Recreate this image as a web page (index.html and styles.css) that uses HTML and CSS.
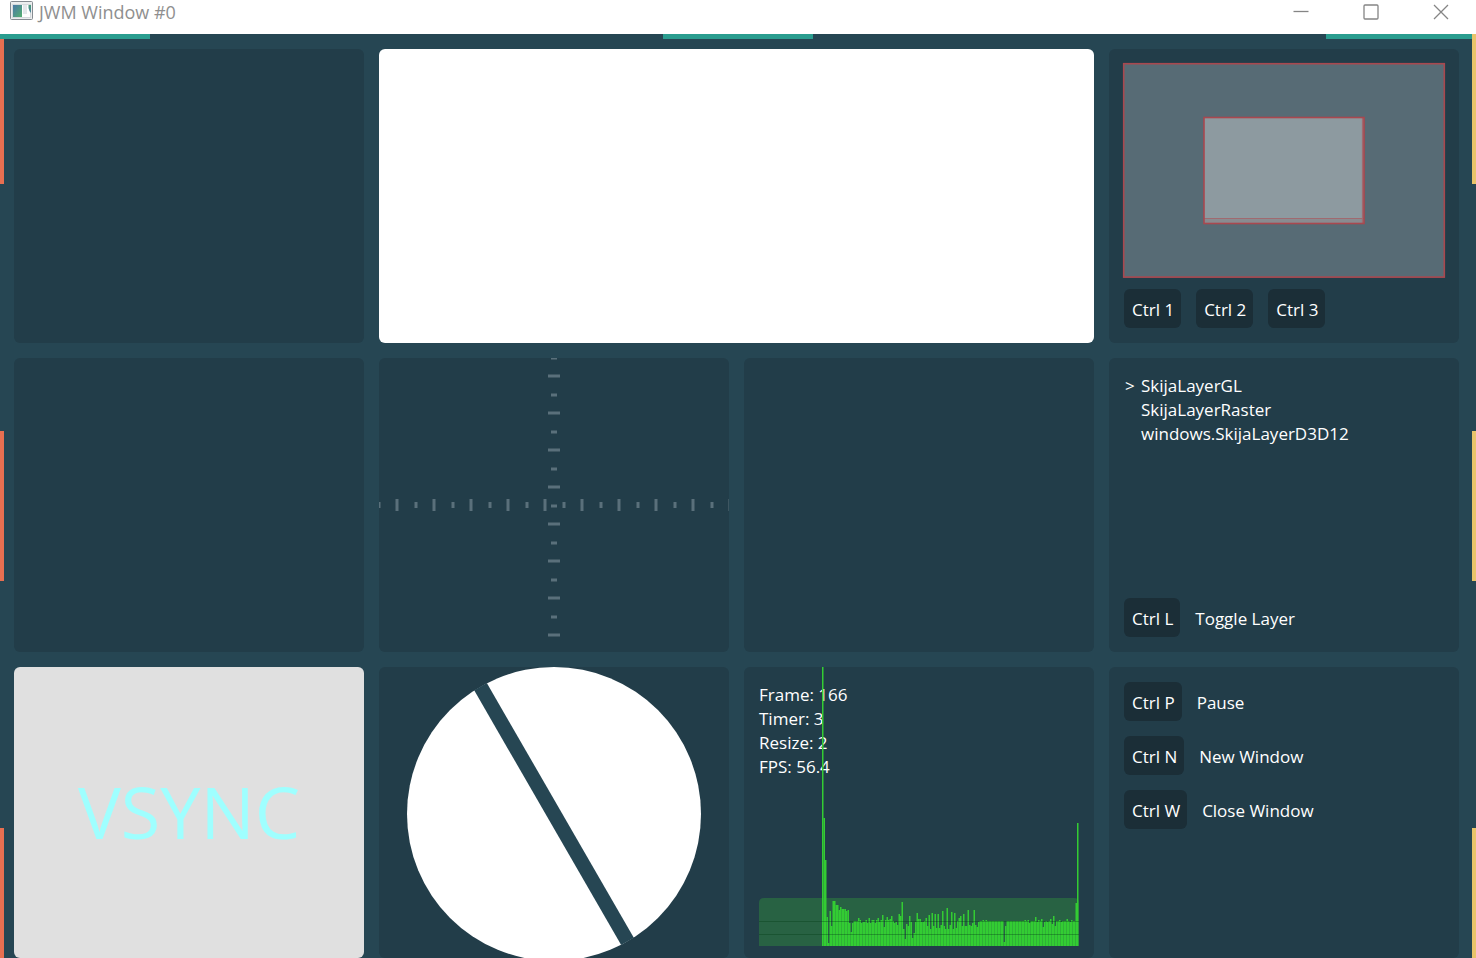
FILE: index.html
```html
<!DOCTYPE html>
<html lang="en">
<head>
<meta charset="utf-8">
<title>JWM Window #0</title>
<link rel="stylesheet" href="styles.css">
</head>
<body>
<header class="titlebar">
  <svg class="app-icon" width="23" height="20" viewBox="0 0 23 20" aria-hidden="true">
    <defs>
      <linearGradient id="pic" x1="0" y1="0" x2="1" y2="1"><stop offset="0" stop-color="#4a78a8"/><stop offset="1" stop-color="#55b070"/></linearGradient>
      <linearGradient id="bar" x1="0" y1="0" x2="0" y2="1"><stop offset="0" stop-color="#4a9a78"/><stop offset="1" stop-color="#4a80a0"/></linearGradient>
    </defs>
    <rect x="0.5" y="0.5" width="22" height="18" rx="1" fill="#eceeef" stroke="#858b91"/>
    <rect x="2.5" y="3.5" width="18" height="13" fill="#fff" stroke="#d5dadd"/>
    <rect x="3" y="4" width="9" height="12" fill="url(#pic)"/>
    <rect x="13" y="4" width="4" height="9" fill="#e3e7ea"/>
    <path d="M18.500 4h2.500v8q-2-2-2.500-5z" fill="url(#bar)"/>
  </svg>
  <h1 class="title">JWM Window #0</h1>
  <div class="controls">
    <button class="control" type="button" aria-label="Minimize"><svg width="16" height="16" viewBox="0 0 16 16"><path d="M0.5 7.500h15"/></svg></button>
    <button class="control" type="button" aria-label="Maximize"><svg width="16" height="16" viewBox="0 0 16 16"><rect x="1" y="1" width="14" height="14" rx="1"/></svg></button>
    <button class="control" type="button" aria-label="Close"><svg width="16" height="16" viewBox="0 0 16 16"><path d="M1 1l14 14M15 1L1 15"/></svg></button>
  </div>
</header>
<main class="stage">
  <div class="edge edge-left"><i></i><i></i><i></i></div>
  <div class="edge edge-top"><i></i><i></i><i></i></div>
  <div class="edge edge-right"><i></i><i></i><i></i></div>

  <section class="panel"></section>
  <section class="panel panel-white"></section>
  <section class="panel panel-screens">
    <svg class="screens" viewBox="0 0 320 213" role="img" aria-label="Screens">
      <rect x="-0.500" y="-0.500" width="321" height="214" fill="#576b75"/>
      <rect class="frame" x="-0.300" y="-0.300" width="320.600" height="213.400"/>
      <rect x="80" y="53" width="160" height="107" fill="#8a8b90"/>
      <rect x="80" y="53" width="158" height="101" fill="#8d9aa0"/>
      <path class="frame-soft" d="M80 154.500h160M238.500 53v106"/>
      <rect class="frame" x="80" y="53.500" width="160" height="106"/>
    </svg>
    <div class="keys"><button class="key" type="button">Ctrl 1</button><button class="key" type="button">Ctrl 2</button><button class="key" type="button">Ctrl 3</button></div>
  </section>

  <section class="panel"></section>
  <section class="panel">
    <svg class="fill" viewBox="0 0 350 294" preserveAspectRatio="xMidYMid slice" aria-hidden="true">
      <g stroke="#5a707b">
        <path d="M16.5 147H350" stroke-width="12" stroke-dasharray="3 34"/>
        <path d="M-1.5 147H350" stroke-width="6" stroke-dasharray="3 34"/>
        <path d="M175 16.5V294" stroke-width="12" stroke-dasharray="3 34"/>
        <path d="M175 -1.5V294" stroke-width="6" stroke-dasharray="3 34"/>
      </g>
    </svg>
  </section>
  <section class="panel"></section>
  <section class="panel panel-layers">
    <ul class="layers">
      <li class="current">SkijaLayerGL</li>
      <li>SkijaLayerRaster</li>
      <li>windows.SkijaLayerD3D12</li>
    </ul>
    <div class="shortcut"><button class="key" type="button" id="toggle">Ctrl L</button><label for="toggle">Toggle Layer</label></div>
  </section>

  <section class="panel panel-vsync">VSYNC</section>
  <section class="panel">
    <svg class="fill" viewBox="0 0 350 291" preserveAspectRatio="xMidYMin slice" aria-hidden="true">
      <circle cx="175" cy="147" r="147" fill="#fff"/>
      <rect x="28" y="139.700" width="294" height="14.600" fill="#264653" transform="rotate(60 175 147)"/>
    </svg>
  </section>
  <section class="panel panel-stats">
    <div>Frame: 166</div>
    <div>Timer: 3</div>
    <div>Resize: 2</div>
    <div>FPS: 56.4</div>
    <svg class="fill" viewBox="0 0 350 291" preserveAspectRatio="xMidYMin slice" role="img" aria-label="Frame times">
      <path d="M15 279V236q0-5 5-5H330q5 0 5 5V279z" fill="#286243"/>
      <g id="bars" fill="#33cc33"></g>
      <path d="M15 254.500H335M15 267.500H335" stroke="#003c14" stroke-opacity="0.350"/>
    </svg>
  </section>
  <section class="panel panel-actions">
    <div class="shortcut"><button class="key" type="button" id="pause">Ctrl P</button><label for="pause">Pause</label></div>
    <div class="shortcut"><button class="key" type="button" id="new">Ctrl N</button><label for="new">New Window</label></div>
    <div class="shortcut"><button class="key" type="button" id="close">Ctrl W</button><label for="close">Close Window</label></div>
  </section>
</main>
<script src="chart.js"></script>
</body>
</html>
```
FILE: styles.css
```css
* { box-sizing: border-box; }
body {
  margin: 0;
  height: 100vh;
  display: flex;
  flex-direction: column;
  overflow: hidden;
  background: #fff;
  color: #fff;
  font: 17px/24px "Open Sans", "Noto Sans", sans-serif;
}
button { font: inherit; color: inherit; border: 0; }
.titlebar {
  height: 34px;
  flex: none;
  display: flex;
  align-items: flex-start;
  gap: 6px;
  padding-left: 10px;
  color: #8f8f8f;
}
.app-icon { margin-top: 1px; }
.title { margin: 0; font-size: 18px; font-weight: 400; flex: 1; }
.controls { display: flex; }
.control {
  width: 70px;
  height: 24px;
  padding: 0;
  background: none;
  display: flex;
  align-items: center;
  justify-content: center;
}
.control svg { fill: none; stroke: #858585; stroke-width: 1.3; }
.stage {
  position: relative;
  flex: 1;
  min-height: 0;
  overflow: hidden;
  background: #264653;
  display: grid;
  grid-template-columns: repeat(4, minmax(0, 1fr));
  grid-template-rows: 294fr 294fr 291fr;
  gap: 15px;
  padding: 15px 17px 0 14px;
}
.edge { position: absolute; display: flex; justify-content: space-between; }
.edge-top { top: 0; left: 0; right: 0; height: 5px; color: #2a9d8f; }
.edge-left, .edge-right { top: 0; bottom: -20px; width: 4px; flex-direction: column; }
.edge-left { left: 0; color: #e76f51; }
.edge-right { right: 0; color: #e9c46a; }
.edge i { flex: 0 0 150px; background: currentColor; }
.panel {
  position: relative;
  min-height: 0;
  border-radius: 6px;
  background: #223d49;
  overflow: hidden;
}
.panel-white { grid-column: span 2; background: #fff; }
.fill { position: absolute; inset: 0; width: 100%; height: 100%; }
.panel-screens, .panel-layers {
  padding: 15px;
  display: flex;
  flex-direction: column;
  justify-content: space-between;
}
.panel-layers { padding-top: 16px; }
.screens { width: 100%; overflow: visible; }
.frame { fill: none; stroke: #a9484f; stroke-width: 1.6; }
.frame-soft { fill: none; stroke: #a06a70; stroke-width: 1.2; }
.keys { display: flex; gap: 15px; }
.key {
  height: 39px;
  padding: 2px 7px 0 8px;
  border-radius: 6px;
  background: #1b2e37;
}
.shortcut { display: flex; align-items: center; gap: 15px; }
.shortcut label { padding-top: 2px; }
.layers { list-style: none; margin: 0; padding: 0 0 0 17px; }
.layers .current::before { content: ">"; float: left; margin-left: -16px; }
.panel-vsync {
  display: flex;
  align-items: center;
  justify-content: center;
  padding-bottom: 4px;
  background: #e0e0e0;
  color: #9fffff;
  font-size: 72px;
}
.panel-stats { padding: 16px 15px; }
.panel-actions { padding: 15px; display: flex; flex-direction: column; gap: 15px; }
```
FILE: chart.js
```js
const heights = [
  279, 128, 86, 29, 3, 35, 20, 45, 45, 41, 41, 36, 39, 37, 37, 37, 35, 36, 23, 14,
  23, 25, 25, 25, 28, 26, 23, 24, 24, 26, 23, 28, 23, 26, 26, 23, 26, 28, 24, 26,
  31, 19, 26, 29, 26, 27, 30, 25, 23, 24, 21, 32, 30, 44, 17, 7, 22, 20, 30, 24,
  8, 13, 24, 33, 27, 27, 24, 24, 25, 28, 20, 31, 17, 33, 20, 32, 18, 32, 18, 21,
  35, 20, 17, 38, 17, 21, 34, 17, 33, 18, 25, 28, 30, 20, 32, 20, 20, 36, 21, 20,
  23, 36, 21, 19, 24, 25, 25, 26, 25, 26, 25, 25, 25, 25, 25, 25, 25, 25, 25, 25,
  25, 4, 20, 25, 25, 25, 25, 25, 25, 25, 25, 25, 25, 25, 25, 26, 25, 26, 23, 25,
  25, 25, 29, 24, 26, 25, 27, 19, 24, 25, 24, 25, 27, 22, 30, 20, 25, 25, 26, 24,
  25, 25, 25, 27, 25, 24, 26, 25, 25, 43, 123
];
const bars = document.getElementById("bars");
heights.forEach((h, i) => {
  const bar = document.createElementNS("http://www.w3.org/2000/svg", "rect");
  bar.setAttribute("x", 78 + i * 1.5);
  bar.setAttribute("y", 279 - h);
  bar.setAttribute("width", 1.5);
  bar.setAttribute("height", h);
  bars.append(bar);
});
```
